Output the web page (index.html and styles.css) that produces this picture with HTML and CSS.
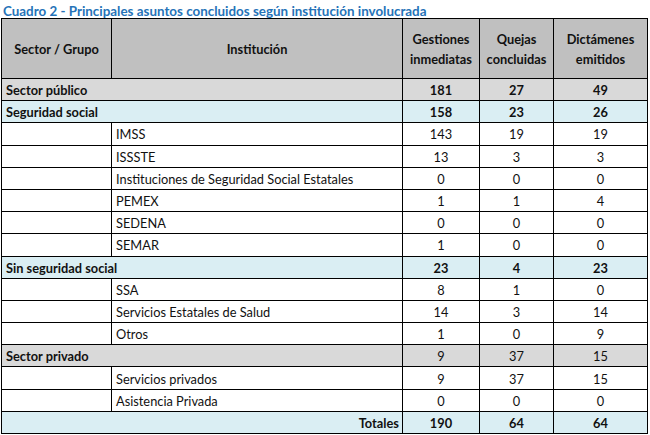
FILE: index.html
```html
<!DOCTYPE html>
<html lang="es">
<head>
<meta charset="utf-8">
<title>Cuadro 2</title>
<link rel="stylesheet" href="styles.css">
</head>
<body>
<div class="page">
  <h1 class="title">Cuadro 2 - Principales asuntos concluidos según institución involucrada</h1>
  <table class="grid">
    <colgroup>
      <col class="c-sector">
      <col class="c-inst">
      <col class="c-gest">
      <col class="c-quej">
      <col class="c-dict">
    </colgroup>
    <thead>
      <tr class="head">
        <th>Sector / Grupo</th>
        <th>Institución</th>
        <th>Gestiones<br>inmediatas</th>
        <th>Quejas<br>concluidas</th>
        <th>Dictámenes<br>emitidos</th>
      </tr>
    </thead>
    <tbody>
      <tr class="sector bold"><td colspan="2" class="label">Sector público</td><td>181</td><td>27</td><td>49</td></tr>
      <tr class="group bold"><td colspan="2" class="label">Seguridad social</td><td>158</td><td>23</td><td>26</td></tr>
      <tr><td></td><td class="label">IMSS</td><td>143</td><td>19</td><td>19</td></tr>
      <tr><td></td><td class="label">ISSSTE</td><td>13</td><td>3</td><td>3</td></tr>
      <tr><td></td><td class="label">Instituciones de Seguridad Social Estatales</td><td>0</td><td>0</td><td>0</td></tr>
      <tr><td></td><td class="label">PEMEX</td><td>1</td><td>1</td><td>4</td></tr>
      <tr><td></td><td class="label">SEDENA</td><td>0</td><td>0</td><td>0</td></tr>
      <tr><td></td><td class="label">SEMAR</td><td>1</td><td>0</td><td>0</td></tr>
      <tr class="group bold"><td colspan="2" class="label">Sin seguridad social</td><td>23</td><td>4</td><td>23</td></tr>
      <tr><td></td><td class="label">SSA</td><td>8</td><td>1</td><td>0</td></tr>
      <tr><td></td><td class="label">Servicios Estatales de Salud</td><td>14</td><td>3</td><td>14</td></tr>
      <tr><td></td><td class="label">Otros</td><td>1</td><td>0</td><td>9</td></tr>
      <tr class="sector"><td colspan="2" class="label strong">Sector privado</td><td>9</td><td>37</td><td>15</td></tr>
      <tr><td></td><td class="label">Servicios privados</td><td>9</td><td>37</td><td>15</td></tr>
      <tr><td></td><td class="label">Asistencia Privada</td><td>0</td><td>0</td><td>0</td></tr>
      <tr class="group bold total"><td colspan="2" class="right">Totales</td><td>190</td><td>64</td><td>64</td></tr>
    </tbody>
  </table>
</div>
</body>
</html>
```

FILE: styles.css
```css
html, body {
  margin: 0;
  padding: 0;
  background: #ffffff;
}
.page {
  padding: 0 0 0 1px;
  font-family: Lato, "Open Sans", sans-serif;
  color: #111111;
}
.title {
  margin: 0;
  padding: 4px 0 0 2px;
  height: 14px;
  font-size: 13.4px;
  line-height: 14px;
  font-weight: 700;
  color: #2673b8;
}
.grid {
  border-collapse: collapse;
  table-layout: fixed;
  width: 646px;
  font-size: 12.8px;
}
.c-sector { width: 110px; }
.c-inst { width: 291px; }
.c-gest { width: 77px; }
.c-quej { width: 74px; }
.c-dict { width: 94px; }
.grid th, .grid td {
  border: 1px solid #000000;
  padding: 0 4px;
  text-align: center;
  vertical-align: middle;
  white-space: nowrap;
  overflow: hidden;
}
.grid tbody tr {
  height: 22.2px;
}
.grid td {
  line-height: 15px;
  padding-top: 2px;
}
.head {
  height: 60px;
}
.head th {
  background: #c0c0c0;
  font-weight: 700;
  line-height: 20px;
}
.grid td.label {
  text-align: left;
}
.grid td.right {
  text-align: right;
  padding-right: 3px;
}
.bold td, .strong {
  font-weight: 700;
}
.sector td {
  background: #d9d9d9;
}
.group td {
  background: #daeef3;
}
```
